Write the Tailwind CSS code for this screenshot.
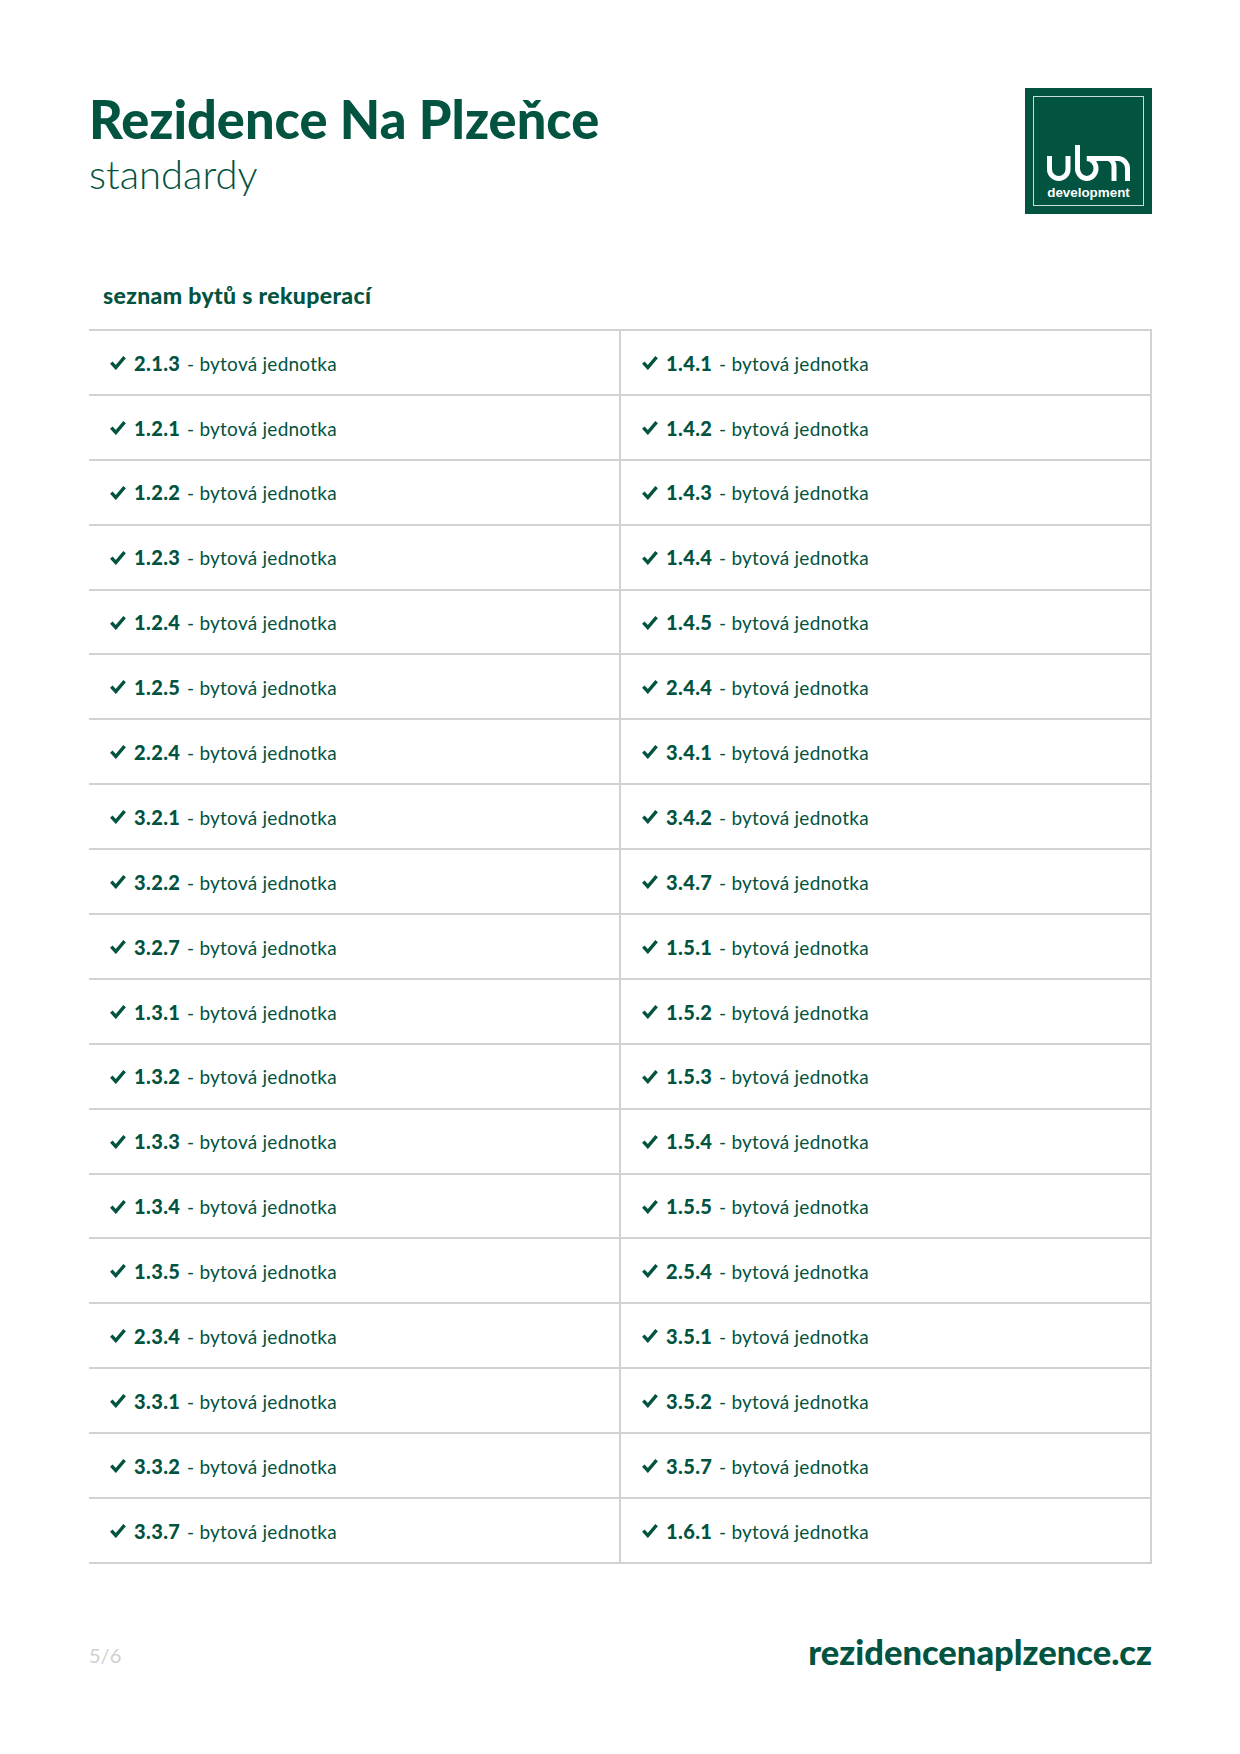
<!DOCTYPE html>
<html lang="cs">
<head>
<meta charset="utf-8">
<script src="https://cdn.jsdelivr.net/npm/@tailwindcss/browser@4"></script>
<title>Rezidence Na Plzeňce</title>
</head>
<body class="bg-white">
<svg class="hidden"><symbol id="c" viewBox="0 0 16 14"><path d="M1.3 7.2 L5.8 12 L14.6 1.6" fill="none" stroke="#02533f" stroke-width="3.4"/></symbol></svg>
<main class="w-[1240px] h-[1754px] pl-[89px] pr-[88px] pt-[88px] font-['Lato','Noto_Sans',sans-serif] text-[#02533f]">
  <header class="flex justify-between h-[126px]">
    <div>
      <h1 class="text-[52.3px] leading-[56px] font-black mt-[3px]">Rezidence Na Plzeňce</h1>
      <p class="text-[40px] leading-[44px] font-light mt-[5px]">standardy</p>
    </div>
    <div class="w-[127px] h-[126px] bg-[#02533f] p-[8px]">
      <div class="w-full h-full border border-white/80 relative">
        <svg class="absolute left-[13px] top-[48px]" width="84" height="37" viewBox="0 0 84 37" fill="none" stroke="#fff" stroke-width="5">
          <path d="M2.5 11 V24.25 A9.25 9.25 0 0 0 21 24.25 V11"/>
          <path d="M30.5 0 V23.5 A9.25 10 0 0 0 49 23.5 A9.25 10 0 0 0 39.75 13.5 H71 A9.5 10 0 0 1 80.5 23.5 V36"/>
          <path d="M60 13.5 A7 8 0 0 1 67 21.5 V36"/>
        </svg>
        <span class="absolute left-0 right-0 bottom-[4px] text-center text-white text-[13.4px] leading-[16px] font-bold font-['Liberation_Sans',sans-serif]">development</span>
      </div>
    </div>
  </header>

  <h2 class="mt-[66px] pl-[14px] text-[23px] leading-[30px] font-black tracking-[0.35px]">seznam bytů s rekuperací</h2>

  <section class="mt-[19px] grid grid-cols-[532px_531px] border-t-2 border-r-2 border-[#d2d2d2] grid-rows-[repeat(19,64.9px)] grid-flow-col w-[1063px] text-[19px]">
    <div class="flex items-center pl-[21px] border-b-2 border-r-2 border-[#d2d2d2]"><svg class="w-[16px] h-[15px] mr-[8px]"><use href="#c"/></svg><p class="pt-[1px]"><b class="inline-block font-black w-[47px] text-[20px] tracking-[0.4px]">2.1.3</b><span class="ml-[6px] tracking-[0.25px]">- bytová jednotka</span></p></div>
    <div class="flex items-center pl-[21px] border-b-2 border-r-2 border-[#d2d2d2]"><svg class="w-[16px] h-[15px] mr-[8px]"><use href="#c"/></svg><p class="pt-[1px]"><b class="inline-block font-black w-[47px] text-[20px] tracking-[0.4px]">1.2.1</b><span class="ml-[6px] tracking-[0.25px]">- bytová jednotka</span></p></div>
    <div class="flex items-center pl-[21px] border-b-2 border-r-2 border-[#d2d2d2]"><svg class="w-[16px] h-[15px] mr-[8px]"><use href="#c"/></svg><p class="pt-[1px]"><b class="inline-block font-black w-[47px] text-[20px] tracking-[0.4px]">1.2.2</b><span class="ml-[6px] tracking-[0.25px]">- bytová jednotka</span></p></div>
    <div class="flex items-center pl-[21px] border-b-2 border-r-2 border-[#d2d2d2]"><svg class="w-[16px] h-[15px] mr-[8px]"><use href="#c"/></svg><p class="pt-[1px]"><b class="inline-block font-black w-[47px] text-[20px] tracking-[0.4px]">1.2.3</b><span class="ml-[6px] tracking-[0.25px]">- bytová jednotka</span></p></div>
    <div class="flex items-center pl-[21px] border-b-2 border-r-2 border-[#d2d2d2]"><svg class="w-[16px] h-[15px] mr-[8px]"><use href="#c"/></svg><p class="pt-[1px]"><b class="inline-block font-black w-[47px] text-[20px] tracking-[0.4px]">1.2.4</b><span class="ml-[6px] tracking-[0.25px]">- bytová jednotka</span></p></div>
    <div class="flex items-center pl-[21px] border-b-2 border-r-2 border-[#d2d2d2]"><svg class="w-[16px] h-[15px] mr-[8px]"><use href="#c"/></svg><p class="pt-[1px]"><b class="inline-block font-black w-[47px] text-[20px] tracking-[0.4px]">1.2.5</b><span class="ml-[6px] tracking-[0.25px]">- bytová jednotka</span></p></div>
    <div class="flex items-center pl-[21px] border-b-2 border-r-2 border-[#d2d2d2]"><svg class="w-[16px] h-[15px] mr-[8px]"><use href="#c"/></svg><p class="pt-[1px]"><b class="inline-block font-black w-[47px] text-[20px] tracking-[0.4px]">2.2.4</b><span class="ml-[6px] tracking-[0.25px]">- bytová jednotka</span></p></div>
    <div class="flex items-center pl-[21px] border-b-2 border-r-2 border-[#d2d2d2]"><svg class="w-[16px] h-[15px] mr-[8px]"><use href="#c"/></svg><p class="pt-[1px]"><b class="inline-block font-black w-[47px] text-[20px] tracking-[0.4px]">3.2.1</b><span class="ml-[6px] tracking-[0.25px]">- bytová jednotka</span></p></div>
    <div class="flex items-center pl-[21px] border-b-2 border-r-2 border-[#d2d2d2]"><svg class="w-[16px] h-[15px] mr-[8px]"><use href="#c"/></svg><p class="pt-[1px]"><b class="inline-block font-black w-[47px] text-[20px] tracking-[0.4px]">3.2.2</b><span class="ml-[6px] tracking-[0.25px]">- bytová jednotka</span></p></div>
    <div class="flex items-center pl-[21px] border-b-2 border-r-2 border-[#d2d2d2]"><svg class="w-[16px] h-[15px] mr-[8px]"><use href="#c"/></svg><p class="pt-[1px]"><b class="inline-block font-black w-[47px] text-[20px] tracking-[0.4px]">3.2.7</b><span class="ml-[6px] tracking-[0.25px]">- bytová jednotka</span></p></div>
    <div class="flex items-center pl-[21px] border-b-2 border-r-2 border-[#d2d2d2]"><svg class="w-[16px] h-[15px] mr-[8px]"><use href="#c"/></svg><p class="pt-[1px]"><b class="inline-block font-black w-[47px] text-[20px] tracking-[0.4px]">1.3.1</b><span class="ml-[6px] tracking-[0.25px]">- bytová jednotka</span></p></div>
    <div class="flex items-center pl-[21px] border-b-2 border-r-2 border-[#d2d2d2]"><svg class="w-[16px] h-[15px] mr-[8px]"><use href="#c"/></svg><p class="pt-[1px]"><b class="inline-block font-black w-[47px] text-[20px] tracking-[0.4px]">1.3.2</b><span class="ml-[6px] tracking-[0.25px]">- bytová jednotka</span></p></div>
    <div class="flex items-center pl-[21px] border-b-2 border-r-2 border-[#d2d2d2]"><svg class="w-[16px] h-[15px] mr-[8px]"><use href="#c"/></svg><p class="pt-[1px]"><b class="inline-block font-black w-[47px] text-[20px] tracking-[0.4px]">1.3.3</b><span class="ml-[6px] tracking-[0.25px]">- bytová jednotka</span></p></div>
    <div class="flex items-center pl-[21px] border-b-2 border-r-2 border-[#d2d2d2]"><svg class="w-[16px] h-[15px] mr-[8px]"><use href="#c"/></svg><p class="pt-[1px]"><b class="inline-block font-black w-[47px] text-[20px] tracking-[0.4px]">1.3.4</b><span class="ml-[6px] tracking-[0.25px]">- bytová jednotka</span></p></div>
    <div class="flex items-center pl-[21px] border-b-2 border-r-2 border-[#d2d2d2]"><svg class="w-[16px] h-[15px] mr-[8px]"><use href="#c"/></svg><p class="pt-[1px]"><b class="inline-block font-black w-[47px] text-[20px] tracking-[0.4px]">1.3.5</b><span class="ml-[6px] tracking-[0.25px]">- bytová jednotka</span></p></div>
    <div class="flex items-center pl-[21px] border-b-2 border-r-2 border-[#d2d2d2]"><svg class="w-[16px] h-[15px] mr-[8px]"><use href="#c"/></svg><p class="pt-[1px]"><b class="inline-block font-black w-[47px] text-[20px] tracking-[0.4px]">2.3.4</b><span class="ml-[6px] tracking-[0.25px]">- bytová jednotka</span></p></div>
    <div class="flex items-center pl-[21px] border-b-2 border-r-2 border-[#d2d2d2]"><svg class="w-[16px] h-[15px] mr-[8px]"><use href="#c"/></svg><p class="pt-[1px]"><b class="inline-block font-black w-[47px] text-[20px] tracking-[0.4px]">3.3.1</b><span class="ml-[6px] tracking-[0.25px]">- bytová jednotka</span></p></div>
    <div class="flex items-center pl-[21px] border-b-2 border-r-2 border-[#d2d2d2]"><svg class="w-[16px] h-[15px] mr-[8px]"><use href="#c"/></svg><p class="pt-[1px]"><b class="inline-block font-black w-[47px] text-[20px] tracking-[0.4px]">3.3.2</b><span class="ml-[6px] tracking-[0.25px]">- bytová jednotka</span></p></div>
    <div class="flex items-center pl-[21px] border-b-2 border-r-2 border-[#d2d2d2]"><svg class="w-[16px] h-[15px] mr-[8px]"><use href="#c"/></svg><p class="pt-[1px]"><b class="inline-block font-black w-[47px] text-[20px] tracking-[0.4px]">3.3.7</b><span class="ml-[6px] tracking-[0.25px]">- bytová jednotka</span></p></div>
    <div class="flex items-center pl-[21px] border-b-2 border-[#d2d2d2]"><svg class="w-[16px] h-[15px] mr-[8px]"><use href="#c"/></svg><p class="pt-[1px]"><b class="inline-block font-black w-[47px] text-[20px] tracking-[0.4px]">1.4.1</b><span class="ml-[6px] tracking-[0.25px]">- bytová jednotka</span></p></div>
    <div class="flex items-center pl-[21px] border-b-2 border-[#d2d2d2]"><svg class="w-[16px] h-[15px] mr-[8px]"><use href="#c"/></svg><p class="pt-[1px]"><b class="inline-block font-black w-[47px] text-[20px] tracking-[0.4px]">1.4.2</b><span class="ml-[6px] tracking-[0.25px]">- bytová jednotka</span></p></div>
    <div class="flex items-center pl-[21px] border-b-2 border-[#d2d2d2]"><svg class="w-[16px] h-[15px] mr-[8px]"><use href="#c"/></svg><p class="pt-[1px]"><b class="inline-block font-black w-[47px] text-[20px] tracking-[0.4px]">1.4.3</b><span class="ml-[6px] tracking-[0.25px]">- bytová jednotka</span></p></div>
    <div class="flex items-center pl-[21px] border-b-2 border-[#d2d2d2]"><svg class="w-[16px] h-[15px] mr-[8px]"><use href="#c"/></svg><p class="pt-[1px]"><b class="inline-block font-black w-[47px] text-[20px] tracking-[0.4px]">1.4.4</b><span class="ml-[6px] tracking-[0.25px]">- bytová jednotka</span></p></div>
    <div class="flex items-center pl-[21px] border-b-2 border-[#d2d2d2]"><svg class="w-[16px] h-[15px] mr-[8px]"><use href="#c"/></svg><p class="pt-[1px]"><b class="inline-block font-black w-[47px] text-[20px] tracking-[0.4px]">1.4.5</b><span class="ml-[6px] tracking-[0.25px]">- bytová jednotka</span></p></div>
    <div class="flex items-center pl-[21px] border-b-2 border-[#d2d2d2]"><svg class="w-[16px] h-[15px] mr-[8px]"><use href="#c"/></svg><p class="pt-[1px]"><b class="inline-block font-black w-[47px] text-[20px] tracking-[0.4px]">2.4.4</b><span class="ml-[6px] tracking-[0.25px]">- bytová jednotka</span></p></div>
    <div class="flex items-center pl-[21px] border-b-2 border-[#d2d2d2]"><svg class="w-[16px] h-[15px] mr-[8px]"><use href="#c"/></svg><p class="pt-[1px]"><b class="inline-block font-black w-[47px] text-[20px] tracking-[0.4px]">3.4.1</b><span class="ml-[6px] tracking-[0.25px]">- bytová jednotka</span></p></div>
    <div class="flex items-center pl-[21px] border-b-2 border-[#d2d2d2]"><svg class="w-[16px] h-[15px] mr-[8px]"><use href="#c"/></svg><p class="pt-[1px]"><b class="inline-block font-black w-[47px] text-[20px] tracking-[0.4px]">3.4.2</b><span class="ml-[6px] tracking-[0.25px]">- bytová jednotka</span></p></div>
    <div class="flex items-center pl-[21px] border-b-2 border-[#d2d2d2]"><svg class="w-[16px] h-[15px] mr-[8px]"><use href="#c"/></svg><p class="pt-[1px]"><b class="inline-block font-black w-[47px] text-[20px] tracking-[0.4px]">3.4.7</b><span class="ml-[6px] tracking-[0.25px]">- bytová jednotka</span></p></div>
    <div class="flex items-center pl-[21px] border-b-2 border-[#d2d2d2]"><svg class="w-[16px] h-[15px] mr-[8px]"><use href="#c"/></svg><p class="pt-[1px]"><b class="inline-block font-black w-[47px] text-[20px] tracking-[0.4px]">1.5.1</b><span class="ml-[6px] tracking-[0.25px]">- bytová jednotka</span></p></div>
    <div class="flex items-center pl-[21px] border-b-2 border-[#d2d2d2]"><svg class="w-[16px] h-[15px] mr-[8px]"><use href="#c"/></svg><p class="pt-[1px]"><b class="inline-block font-black w-[47px] text-[20px] tracking-[0.4px]">1.5.2</b><span class="ml-[6px] tracking-[0.25px]">- bytová jednotka</span></p></div>
    <div class="flex items-center pl-[21px] border-b-2 border-[#d2d2d2]"><svg class="w-[16px] h-[15px] mr-[8px]"><use href="#c"/></svg><p class="pt-[1px]"><b class="inline-block font-black w-[47px] text-[20px] tracking-[0.4px]">1.5.3</b><span class="ml-[6px] tracking-[0.25px]">- bytová jednotka</span></p></div>
    <div class="flex items-center pl-[21px] border-b-2 border-[#d2d2d2]"><svg class="w-[16px] h-[15px] mr-[8px]"><use href="#c"/></svg><p class="pt-[1px]"><b class="inline-block font-black w-[47px] text-[20px] tracking-[0.4px]">1.5.4</b><span class="ml-[6px] tracking-[0.25px]">- bytová jednotka</span></p></div>
    <div class="flex items-center pl-[21px] border-b-2 border-[#d2d2d2]"><svg class="w-[16px] h-[15px] mr-[8px]"><use href="#c"/></svg><p class="pt-[1px]"><b class="inline-block font-black w-[47px] text-[20px] tracking-[0.4px]">1.5.5</b><span class="ml-[6px] tracking-[0.25px]">- bytová jednotka</span></p></div>
    <div class="flex items-center pl-[21px] border-b-2 border-[#d2d2d2]"><svg class="w-[16px] h-[15px] mr-[8px]"><use href="#c"/></svg><p class="pt-[1px]"><b class="inline-block font-black w-[47px] text-[20px] tracking-[0.4px]">2.5.4</b><span class="ml-[6px] tracking-[0.25px]">- bytová jednotka</span></p></div>
    <div class="flex items-center pl-[21px] border-b-2 border-[#d2d2d2]"><svg class="w-[16px] h-[15px] mr-[8px]"><use href="#c"/></svg><p class="pt-[1px]"><b class="inline-block font-black w-[47px] text-[20px] tracking-[0.4px]">3.5.1</b><span class="ml-[6px] tracking-[0.25px]">- bytová jednotka</span></p></div>
    <div class="flex items-center pl-[21px] border-b-2 border-[#d2d2d2]"><svg class="w-[16px] h-[15px] mr-[8px]"><use href="#c"/></svg><p class="pt-[1px]"><b class="inline-block font-black w-[47px] text-[20px] tracking-[0.4px]">3.5.2</b><span class="ml-[6px] tracking-[0.25px]">- bytová jednotka</span></p></div>
    <div class="flex items-center pl-[21px] border-b-2 border-[#d2d2d2]"><svg class="w-[16px] h-[15px] mr-[8px]"><use href="#c"/></svg><p class="pt-[1px]"><b class="inline-block font-black w-[47px] text-[20px] tracking-[0.4px]">3.5.7</b><span class="ml-[6px] tracking-[0.25px]">- bytová jednotka</span></p></div>
    <div class="flex items-center pl-[21px] border-b-2 border-[#d2d2d2]"><svg class="w-[16px] h-[15px] mr-[8px]"><use href="#c"/></svg><p class="pt-[1px]"><b class="inline-block font-black w-[47px] text-[20px] tracking-[0.4px]">1.6.1</b><span class="ml-[6px] tracking-[0.25px]">- bytová jednotka</span></p></div>
  </section>

  <footer class="mt-[68px] flex justify-between items-center">
    <span class="text-[20px] leading-[36px] text-[#cfcfcf] mt-[5px]">5/6</span>
    <span class="text-[34.5px] leading-[36px] font-black">rezidencenaplzence.cz</span>
  </footer>
</main>
</body>
</html>
